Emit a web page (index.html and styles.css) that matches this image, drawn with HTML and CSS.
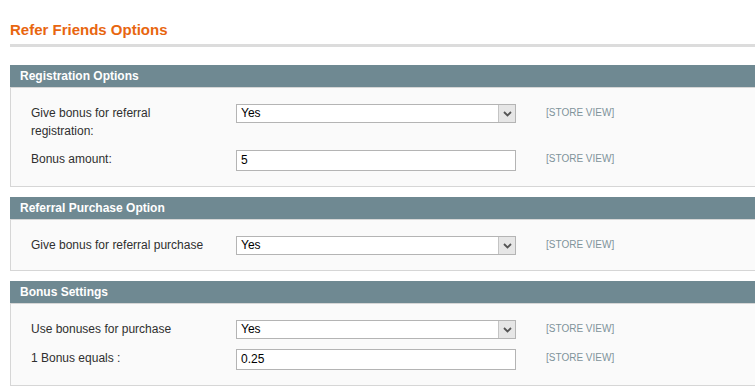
FILE: index.html
```html
<!DOCTYPE html>
<html>
<head>
<meta charset="utf-8">
<link rel="stylesheet" href="styles.css">
</head>
<body>
<div class="page">
  <h3 class="page-title">Refer Friends Options</h3>
  <div class="title-rule"></div>

  <div class="section">
    <div class="section-head">Registration Options</div>
    <div class="fieldset">
      <div class="row">
        <div class="label">Give bonus for referral registration:</div>
        <div class="select"><span class="select-value">Yes</span><span class="select-arrow"><svg width="9" height="6" viewBox="0 0 9 6"><path d="M1 1 L4.5 4.5 L8 1" fill="none" stroke="#555" stroke-width="1.8"/></svg></span></div>
        <div class="scope">[STORE VIEW]</div>
      </div>
      <div class="row">
        <div class="label">Bonus amount:</div>
        <div class="input">5</div>
        <div class="scope">[STORE VIEW]</div>
      </div>
    </div>
  </div>

  <div class="section">
    <div class="section-head">Referral Purchase Option</div>
    <div class="fieldset">
      <div class="row">
        <div class="label">Give bonus for referral purchase</div>
        <div class="select"><span class="select-value">Yes</span><span class="select-arrow"><svg width="9" height="6" viewBox="0 0 9 6"><path d="M1 1 L4.5 4.5 L8 1" fill="none" stroke="#555" stroke-width="1.8"/></svg></span></div>
        <div class="scope">[STORE VIEW]</div>
      </div>
    </div>
  </div>

  <div class="section">
    <div class="section-head">Bonus Settings</div>
    <div class="fieldset">
      <div class="row">
        <div class="label">Use bonuses for purchase</div>
        <div class="select"><span class="select-value">Yes</span><span class="select-arrow"><svg width="9" height="6" viewBox="0 0 9 6"><path d="M1 1 L4.5 4.5 L8 1" fill="none" stroke="#555" stroke-width="1.8"/></svg></span></div>
        <div class="scope">[STORE VIEW]</div>
      </div>
      <div class="row">
        <div class="label">1 Bonus equals :</div>
        <div class="input">0.25</div>
        <div class="scope">[STORE VIEW]</div>
      </div>
    </div>
  </div>
</div>
</body>
</html>
```

FILE: styles.css
```css
html, body {
  margin: 0;
  padding: 0;
  background: #ffffff;
  overflow: hidden;
}

body {
  font-family: "Liberation Sans", Arial, sans-serif;
  font-size: 12px;
  color: #2f2f2f;
}

.page {
  padding: 21px 0 0 10px;
}

.page-title {
  margin: 0;
  font-size: 15px;
  line-height: 18px;
  font-weight: bold;
  color: #e8660f;
}

.title-rule {
  margin-top: 5px;
  height: 3px;
  background: #dcdcdc;
}

.section {
  margin-top: 10px;
}

.title-rule + .section {
  margin-top: 18px;
}

.section-head {
  height: 22px;
  line-height: 22px;
  padding-left: 10px;
  background: #6f8992;
  color: #ffffff;
  font-weight: bold;
  font-size: 12px;
}

.fieldset {
  background: #fafafa;
  border: 1px solid #d6d6d6;
  border-right: none;
  padding: 16px 0 15px 20px;
  display: flex;
  flex-direction: column;
  gap: 10px;
}

.row {
  display: grid;
  grid-template-columns: 175px 280px auto;
  column-gap: 30px;
  align-items: start;
}

.label {
  line-height: 18px;
}

.select {
  display: flex;
  height: 19px;
  box-sizing: border-box;
  border: 1px solid #b4b4b4;
  background: #ffffff;
}

.select-value {
  flex: 1;
  padding-left: 4px;
  line-height: 17px;
  color: #000;
}

.select-arrow {
  width: 16px;
  display: flex;
  align-items: center;
  justify-content: center;
  border-left: 1px solid #c4c4c4;
  background: #e6e6e6;
}

.input {
  height: 21px;
  box-sizing: border-box;
  border: 1px solid #b4b4b4;
  background: #ffffff;
  padding-left: 4px;
  line-height: 19px;
  color: #000;
}

.scope {
  font-size: 10px;
  line-height: 18px;
  color: #7f939b;
}
```
